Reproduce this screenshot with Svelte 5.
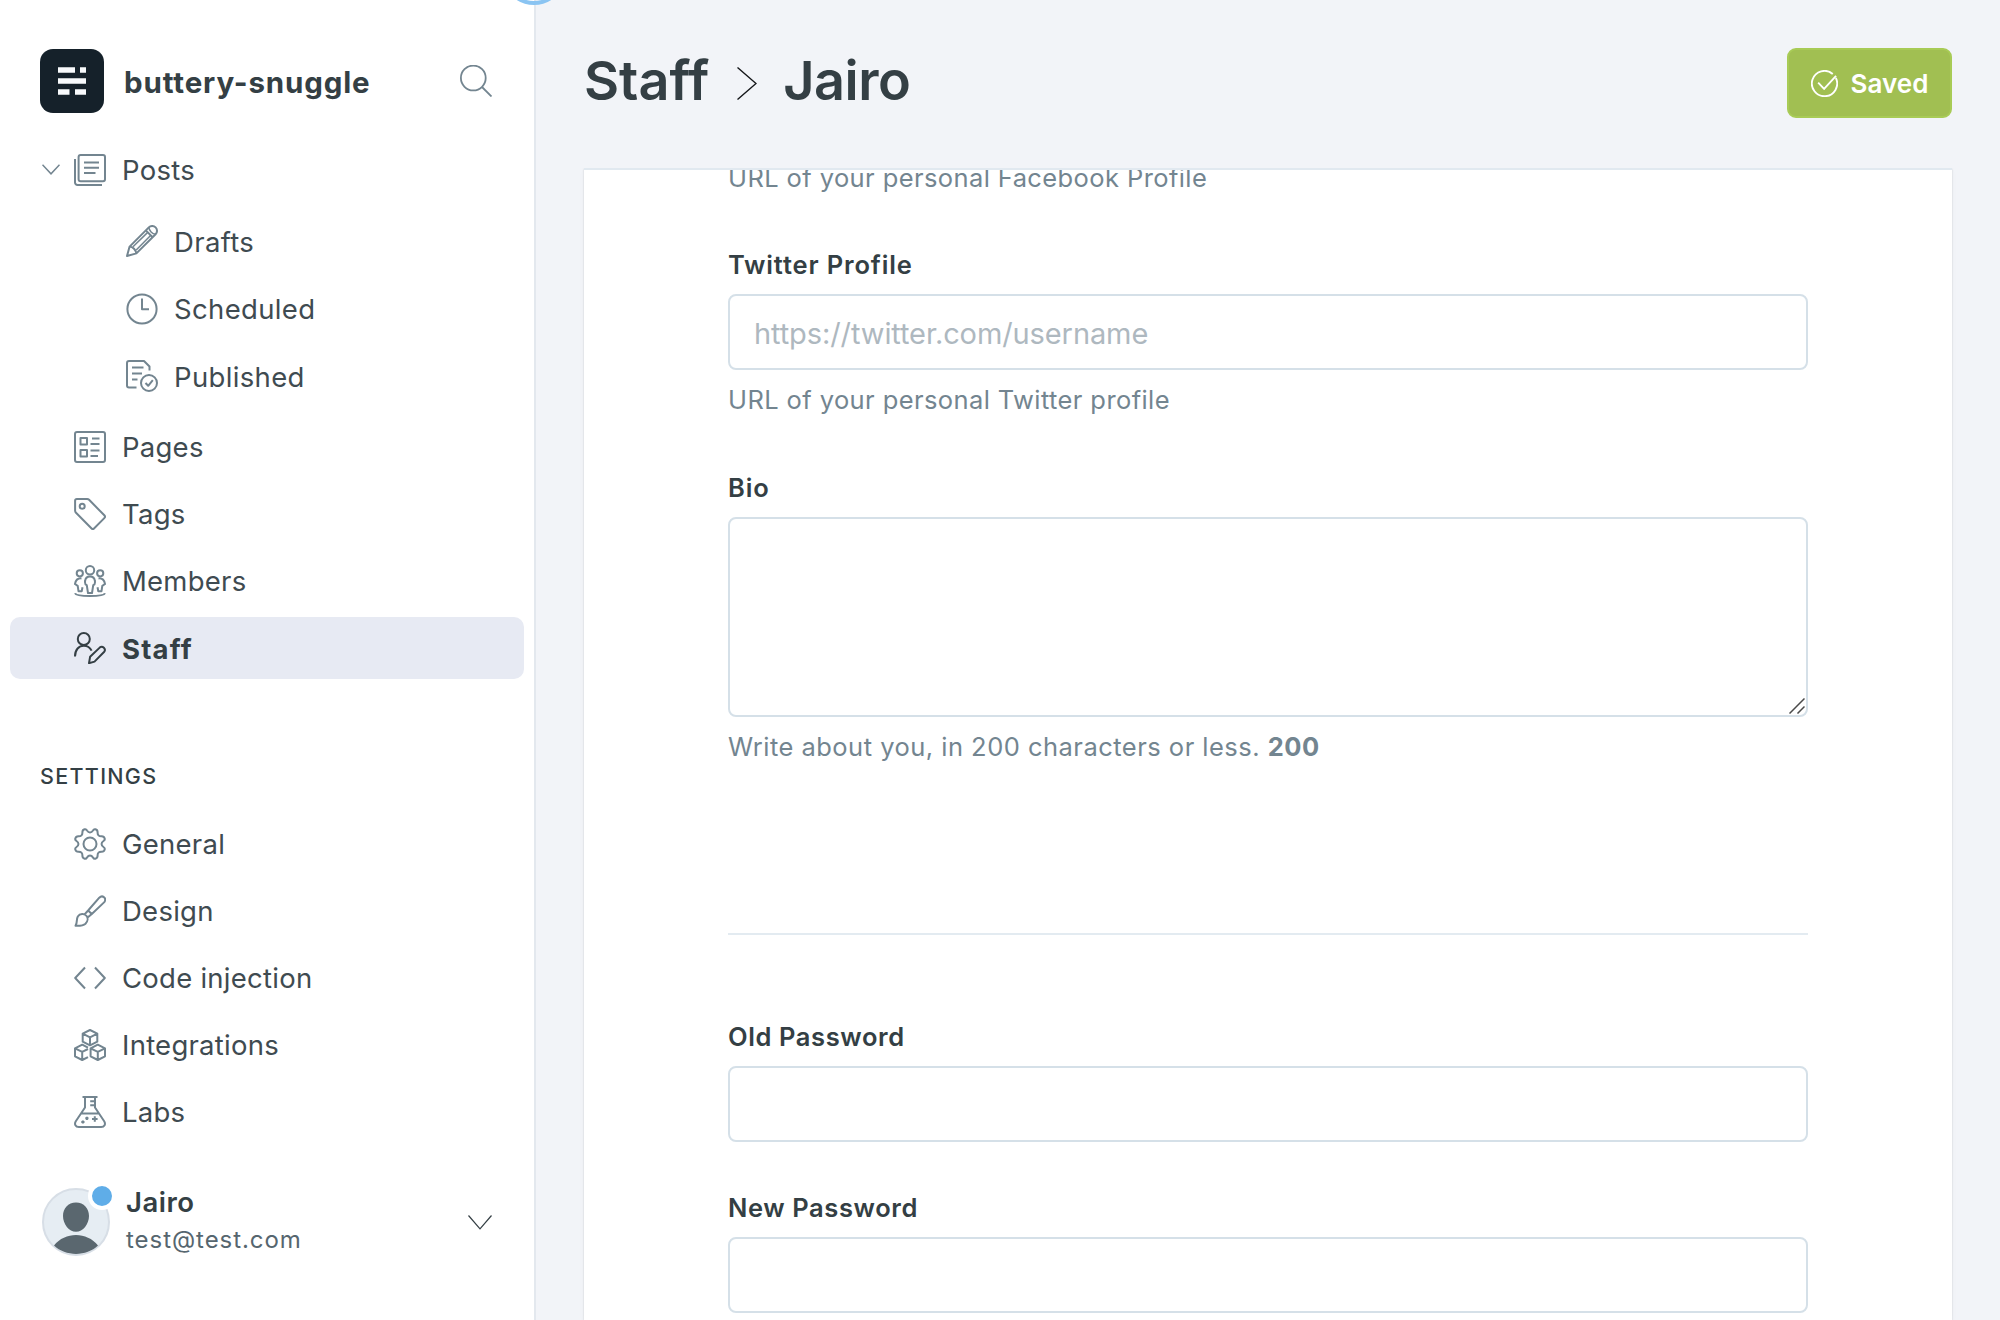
<script lang="ts">
  type Item = { icon: string; label: string; active?: boolean };

  const posts: Item[] = [
    { icon: 'pencil', label: 'Drafts' },
    { icon: 'clock', label: 'Scheduled' },
    { icon: 'published', label: 'Published' },
  ];
  const manage: Item[] = [
    { icon: 'page', label: 'Pages' },
    { icon: 'tag', label: 'Tags' },
    { icon: 'members', label: 'Members' },
    { icon: 'staff', label: 'Staff', active: true },
  ];
  const settings: Item[] = [
    { icon: 'gear', label: 'General' },
    { icon: 'brush', label: 'Design' },
    { icon: 'code', label: 'Code injection' },
    { icon: 'cubes', label: 'Integrations' },
    { icon: 'flask', label: 'Labs' },
  ];
</script>

{#snippet icon(name: string)}
  <svg class="icon" viewBox="0 0 32 32" aria-hidden="true">
    {#if name === 'posts'}
      <rect x="4.6" y="1" width="26.4" height="26.2" rx="2" />
      <path d="M1 5v23.5a2.5 2.5 0 0 0 2.5 2.5H28M10 8.5h15M10 13.8h15M10 19h11.5" />
    {:else if name === 'pencil'}
      <path d="M1 31l2.600-9.400L22.800 2.400a4.800 4.800 0 0 1 6.800 6.800L10.400 28.400zM3.600 21.600c3.300.2 6.300 3.200 6.800 6.800M19.800 5.400l6.800 6.800" />
      <path class="thin" d="M22.800 2.400c.4 3.400 3.400 6.400 6.800 6.800M7 21.800L21.700 7.400M10.200 25L24.800 10.300" />
    {:else if name === 'clock'}
      <circle cx="16" cy="16" r="14.6" /><path d="M16 5.5v10.700h7" />
    {:else if name === 'published'}
      <path d="M10.500 27.500H3a2 2 0 0 1-2-2V3a2 2 0 0 1 2-2h15l5.500 5.500v4M6 7.500h11.500M6 13.500h10M6 19.500h5.500" />
      <circle cx="23" cy="23" r="8" /><path d="M19.500 23l2.700 2.800 4.600-5.600" />
    {:else if name === 'page'}
      <rect x="1" y="1" width="30" height="30" rx="2" />
      <path d="M6.500 7h6.500v6.500H6.500zM6.500 19h6.500v6.500H6.500zM18 7.500h7.500M16.500 13h9M16.500 19.500h9M16.500 25h7.500" />
    {:else if name === 'tag'}
      <path d="M2.800 1h10.400c.8 0 1.400.3 1.900.8L30.300 17.300a2 2 0 0 1 0 2.800L20 30.500a1.700 1.700 0 0 1-2.400 0L2 14.800a3 3 0 0 1-.9-2V2.800A1.700 1.700 0 0 1 2.800 1z" />
      <circle cx="8.200" cy="8.300" r="2.500" />
    {:else if name === 'members'}
      <circle cx="16" cy="5.300" r="4.200" /><circle cx="5.800" cy="8.300" r="3.100" /><circle cx="26.200" cy="8.300" r="3.100" />
      <path d="M12.800 20.300c-1.700-.6-2-2.200-1.700-4.300.3-2.700 2.200-4.500 4.900-4.500s4.600 1.800 4.900 4.500c.3 2.100 0 3.700-1.700 4.300l-1.200 7.700h-4zM7.500 13.400c-3.800-.3-5.800 1.600-6.500 5.600l2.700 1.800.8 5.400h3.200l.8-4M24.500 13.400c3.800-.3 5.800 1.600 6.500 5.600l-2.700 1.800-.8 5.400h-3.200l-.8-4M1 28.300c1.200 3.600 28.800 3.600 30 0" />
    {:else if name === 'staff'}
      <circle cx="9.800" cy="7" r="6" />
      <path d="M1 24.500c0-7 4-10.800 8.800-10.800 3.400 0 6.300 1.800 7.800 5M15 31.200l1.100-6.400 9.600-9.200c2.800-2.400 6.900 1.400 4.300 4.400l-9.500 9.600z" />
    {:else if name === 'gear'}
      <circle cx="16" cy="16" r="6.500" />
      <path d="M13 2.500c-.5-1-1.300-1.500-2.400-1.200-2.200.6-2.300 1.500-2.200 3.200.1 2.500-1.300 3.900-3.800 3.800-1.700-.1-2.700.1-3.300 2.300-.3 1.100.2 1.800 1.200 2.400 2.600 1.700 2.600 4.300 0 6-1 .6-1.500 1.300-1.200 2.400.6 2.200 1.600 2.400 3.300 2.300 2.500-.1 3.900 1.300 3.800 3.800-.1 1.700 0 2.600 2.200 3.200 1.100.3 1.900-.2 2.400-1.200 1.700-2.600 4.300-2.600 6 0 .5 1 1.300 1.500 2.400 1.200 2.200-.6 2.300-1.500 2.200-3.200-.1-2.500 1.300-3.900 3.800-3.800 1.700.1 2.700-.1 3.300-2.300.3-1.100-.2-1.800-1.200-2.400-2.600-1.700-2.600-4.300 0-6 1-.6 1.500-1.300 1.200-2.400-.6-2.200-1.600-2.400-3.300-2.300-2.500.1-3.900-1.300-3.800-3.800.1-1.700 0-2.600-2.200-3.200-1.100-.3-1.900.2-2.400 1.200-1.700 2.600-4.300 2.600-6 0z" />
    {:else if name === 'brush'}
      <path d="M1.500 30.800c2.200-3.500.5-6 2.300-9.300 2.200-3.500 6.400-3.200 8.500-.8 2 2.300 1.500 5.800-.8 8-2.300 2.100-5.500 2.300-10 2.100zM10.800 19.200l3.300-3.700 3.700 3.500-4.200 3.600M14.100 15.500L25.300 2.700c3.200-3.300 7.700.6 5 4.400L17.800 19" />
    {:else if name === 'code'}
      <path d="M11 5.500L1.200 16 11 26.500M21 5.500L30.800 16 21 26.500" />
    {:else if name === 'cubes'}
      <path d="M16 1l7.300 3.700v8L16 16.300l-7.300-3.600v-8zM8.700 4.700L16 8.300l7.300-3.600M16 8.300v8M14 18.600L8.200 15.700 1 19.300v8L8.200 31l5.800-2.900M1 19.300l7.200 3.600 5.800-2.900M8.200 22.900V31M23.800 15.700l7.200 3.600v8L23.800 31l-7.200-3.700v-8zM16.600 19.300l7.200 3.600 7.200-3.600M23.800 22.900V31" />
    {:else if name === 'flask'}
      <path d="M8.500 1h15M11 1v10.500L1.800 25.300c-1.800 3.100-.2 5.700 3 5.700h22.400c3.200 0 4.800-2.600 3-5.700L21 11.500V1M21 5.200h-4.800M21 9.200h-4.800M7 17.500h18M20.800 20.200v5.600M18 23h5.600M11.300 22.300h3.200M12.900 20.700v3.200M7.300 26h3.200M8.900 24.400v3.200" />
    {:else if name === 'search'}
      <circle cx="13.300" cy="13" r="12.400" /><path d="M22 22l9.500 9.500" />
    {:else if name === 'check'}
      <path d="M29.500 9.500A15 15 0 1 1 25.800 4.700M8.500 15l7 7.500L29.700 7" />
    {/if}
  </svg>
{/snippet}

{#snippet link(item: Item)}
  <a class="link" class:active={item.active} href="#{item.icon}">
    {@render icon(item.icon)}<span>{item.label}</span>
  </a>
{/snippet}

<div class="app">
  <nav class="sidebar">
    <span class="handle"></span>
    <header class="site">
      <svg class="logo" viewBox="0 0 64 64" aria-hidden="true">
        <rect width="64" height="64" rx="13" fill="#15212a" />
        <path d="M18 18.200h17v5.600H18zM40 18.200h6v5.600h-6zM18 29.200h28v5.600H18zM18 40.200h11.500v5.600H18zM35 40.200h11v5.600H35z" fill="#f8fafc" />
      </svg>
      <strong>buttery-snuggle</strong>
      <button class="search" aria-label="Search">{@render icon('search')}</button>
    </header>

    <div class="posts">
      <svg class="caret" viewBox="0 0 18 11" aria-hidden="true"><path d="M.5.8L9 9.800 17.500.8" /></svg>
      {@render link({ icon: 'posts', label: 'Posts' })}
    </div>
    <div class="group sub">
      {#each posts as item}{@render link(item)}{/each}
    </div>
    <div class="group manage">
      {#each manage as item}{@render link(item)}{/each}
    </div>
    <h2>Settings</h2>
    <div class="group">
      {#each settings as item}{@render link(item)}{/each}
    </div>

    <footer class="user">
      <div class="avatar">
        <svg viewBox="0 0 68 68" aria-hidden="true">
          <circle cx="34" cy="34" r="33" fill="#e6edf3" stroke="#d7dee6" stroke-width="2" />
          <path d="M34 14.500c8 0 13 6 13 13.500 0 8-6 15.800-13 15.800S21 36 21 28c0-7.500 5-13.500 13-13.500zM12 57.500c11-14 33-14 44 0-11.500 11.200-32.500 11.200-44 0z" fill="#5a676f" />
        </svg>
        <span class="badge"></span>
      </div>
      <div class="who">
        <b>Jairo</b>
        <span>test@test.com</span>
      </div>
      <svg class="chevron" viewBox="0 0 24 15" aria-hidden="true"><path d="M.5.5L12 13.800 23.500.5" /></svg>
    </footer>
  </nav>

  <main>
    <header class="top">
      <h1>
        <span>Staff</span>
        <svg class="arrow" viewBox="0 0 20 33" aria-hidden="true"><path d="M.5.5L19 16.500.5 32.500" /></svg>
        <span class="current">Jairo</span>
      </h1>
      <button class="saved">{@render icon('check')}<span>Saved</span></button>
    </header>

    <section class="panel">
      <form>
        <p class="first">URL of your personal Facebook Profile</p>

        <div class="field">
          <label for="twitter">Twitter Profile</label>
          <input id="twitter" type="url" placeholder="https://twitter.com/username" />
          <p>URL of your personal Twitter profile</p>
        </div>

        <div class="field bio">
          <label for="bio">Bio</label>
          <div class="area">
            <textarea id="bio"></textarea>
            <svg class="grip" viewBox="0 0 16 16" aria-hidden="true"><path d="M.5 15.500l15-15M8.500 15.500l7-7" /></svg>
          </div>
          <p>Write about you, in 200 characters or less. <b>200</b></p>
        </div>

        <hr />

        <div class="field password">
          <label for="old">Old Password</label>
          <input id="old" type="password" />
        </div>
        <div class="field password">
          <label for="new">New Password</label>
          <input id="new" type="password" />
        </div>
      </form>
    </section>
  </main>
</div>

<style>
  :global(body) { background: #f2f4f8; }
  * { box-sizing: border-box; margin: 0; }
  .app {
    display: flex;
    width: 2000px;
    height: 1320px;
    overflow: hidden;
    font-family: Inter, sans-serif;
    color: #394047;
    background: #f2f4f8;
  }
  button { border: 0; padding: 0; background: none; font: inherit; display: flex; cursor: pointer; }
  .icon {
    width: 32px;
    height: 32px;
    flex: none;
    fill: none;
    stroke: #738590;
    stroke-width: 2;
    stroke-linejoin: round;
  }
  .thin { stroke-width: 1.500; }

  .sidebar {
    position: relative;
    display: flex;
    flex-direction: column;
    flex: none;
    width: 536px;
    padding-top: 49px;
    background: #fff;
    border-right: 2px solid #e3e8ee;
  }
  .handle {
    position: absolute;
    top: -59px;
    right: -32px;
    width: 64px;
    height: 64px;
    border: 4px solid #8ac4f2;
    border-radius: 50%;
  }
  .site { display: flex; align-items: center; height: 64px; padding: 0 42px 0 40px; }
  .logo { width: 64px; height: 64px; }
  .site strong {
    flex: 1;
    margin-left: 20px;
    padding-top: 1px;
    font-size: 29.500px;
    font-weight: 700;
    letter-spacing: 0.850px;
    color: #343f44;
  }
  .search .icon { stroke-width: 1.800; }

  .posts { display: flex; align-items: center; height: 64px; margin-top: 25px; padding-left: 42px; }
  .caret { width: 18px; height: 11px; margin-top: -1px; fill: none; stroke: #738590; stroke-width: 1.500; }
  .posts .link { margin: 0; padding-left: 14px; }
  .link {
    display: flex;
    align-items: center;
    gap: 16px;
    height: 62px;
    margin: 0 10px;
    padding-left: 64px;
    border-radius: 10px;
    color: #3f4b51;
    font-size: 27.500px;
    letter-spacing: 0.250px;
    text-decoration: none;
  }
  .group { display: flex; flex-direction: column; gap: 5px; }
  .sub { margin-top: 8px; gap: 5.500px; }
  .sub .link { padding-left: 116px; letter-spacing: 0.350px; }
  .sub .link span { padding-top: 1px; }
  .manage { margin-top: 9px; }
  .link.active { background: #e7eaf3; font-weight: 700; letter-spacing: 1.200px; color: #343f44; }
  .active span { padding-top: 1px; }
  .active .icon { stroke: #343f44; }
  h2 {
    margin: 82px 0 22px 40px;
    font-size: 21.500px;
    line-height: 30px;
    font-weight: 500;
    letter-spacing: 1.300px;
    text-transform: uppercase;
    color: #343f44;
  }

  .user { display: flex; align-items: center; height: 68px; margin-top: 45px; padding: 0 42px; }
  .avatar { position: relative; width: 68px; height: 68px; }
  .avatar svg { display: block; }
  .badge {
    position: absolute;
    top: -6px;
    right: -6px;
    width: 28px;
    height: 28px;
    border: 4px solid #fff;
    border-radius: 50%;
    background: #5fade8;
  }
  .who { display: flex; flex-direction: column; flex: 1; margin: -2px 0 0 16px; }
  .who b { font-size: 27.500px; line-height: 38px; font-weight: 600; letter-spacing: 0.500px; color: #343f44; }
  .who span { font-size: 24px; line-height: 38px; letter-spacing: 0.950px; color: #56666f; }
  .chevron { width: 24px; height: 15px; fill: none; stroke: #343f44; stroke-width: 1.200; }

  main { display: flex; flex-direction: column; flex: 1; padding: 48px 48px 0; }
  .top { display: flex; justify-content: space-between; height: 120px; }
  h1 {
    display: flex;
    align-items: center;
    height: 68px;
    font-size: 54px;
    font-weight: 600;
    color: #343f44;
  }
  h1 span { padding-bottom: 3px; }
  .current { letter-spacing: -0.500px; }
  .arrow { width: 20px; height: 33px; margin: 2px 26px 0 28px; fill: none; stroke: #15171a; stroke-width: 1.400; }
  .saved {
    align-items: center;
    justify-content: center;
    gap: 13px;
    width: 165px;
    height: 70px;
    border: 2px solid #a8cb56;
    border-radius: 9px;
    background: #a1bf52;
    color: #fff;
    font-size: 26px;
    font-weight: 600;
  }
  .saved .icon { width: 27px; height: 27px; stroke: #fff; stroke-width: 2.200; }

  .panel {
    display: flex;
    justify-content: center;
    flex: 1;
    min-height: 0;
    overflow: hidden;
    border-top: 2px solid #e1e9f0;
    box-shadow: 0 1px 2px rgba(0, 0, 0, 0.150), 0 2px 10px rgba(0, 0, 0, 0.020);
    clip-path: inset(0 -12px);
    background: #fff;
  }
  form { width: 1080px; flex: none; }
  .field { display: flex; flex-direction: column; margin-bottom: 52px; }
  .password { margin-bottom: 48px; }
  p { font-size: 25.500px; line-height: 36px; letter-spacing: 0.400px; color: #738590; }
  .bio p { letter-spacing: 0.480px; }
  .first { margin: -10px 0 51px; }
  label {
    font-size: 25.500px;
    line-height: 36px;
    font-weight: 600;
    letter-spacing: 0.850px;
    color: #343f44;
    margin-bottom: 11px;
  }
  .password label { letter-spacing: 0.600px; }
  input, textarea {
    display: block;
    width: 100%;
    height: 76px;
    padding: 2px 24px 0;
    border: 2px solid #d5e0e8;
    border-radius: 8px;
    background: #fff;
    font: 29px Inter, sans-serif;
    letter-spacing: -0.100px;
    outline: 0;
  }
  input::placeholder { color: #aeb8bf; opacity: 1; }
  .area { position: relative; }
  textarea { height: 200px; resize: none; }
  .grip { position: absolute; right: 3px; bottom: 3px; width: 16px; height: 16px; fill: none; stroke: #4a4a4a; stroke-width: 1.500; }
  .field p { margin-top: 12px; }
  .field p b { font-weight: 700; }
  hr { border: 0; border-top: 2px solid #e3ebf1; margin: 168px 0 84px; }
</style>
